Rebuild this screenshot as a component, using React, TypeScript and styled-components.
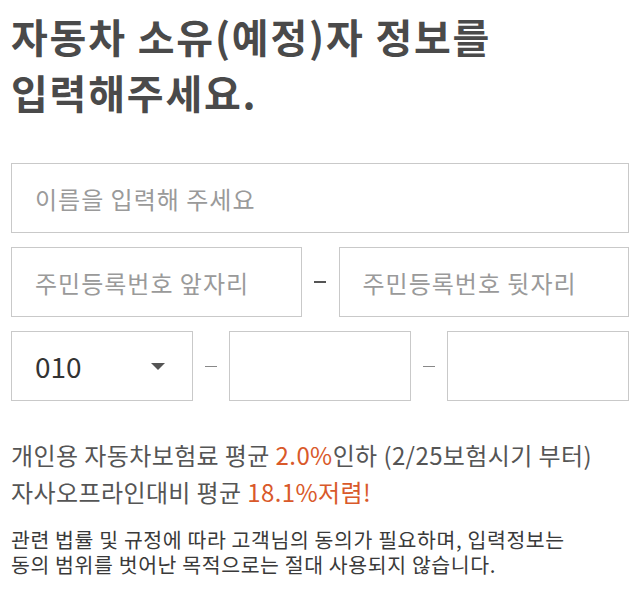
import styled, { createGlobalStyle } from 'styled-components';

const GlobalStyle = createGlobalStyle`
  html, body {
    margin: 0;
    padding: 0;
    background: #fff;
  }
  body {
    font-family: 'Noto Sans CJK KR', 'Noto Sans', sans-serif;
  }
`;

const Page = styled.div`
  width: 618px;
  padding: 8px 7px 0 11px;
`;

const Title = styled.h1`
  margin: 0;
  font-size: 40px;
  line-height: 56px;
  font-weight: 700;
  color: #4a4a4a;
  letter-spacing: 1.8px;
`;

const Form = styled.div`
  display: flex;
  flex-direction: column;
  gap: 14px;
  margin-top: 43px;
`;

const Row = styled.div<{ $cols: string }>`
  display: grid;
  grid-template-columns: ${(p) => p.$cols};
  align-items: center;
`;

const Field = styled.div<{ $placeholder?: boolean }>`
  box-sizing: border-box;
  height: 70px;
  border: 1px solid #c9c9c9;
  background: #fff;
  display: flex;
  align-items: center;
  justify-content: space-between;
  padding: 0 27px 0 23px;
  font-size: ${(p) => (p.$placeholder ? '24px' : '28px')};
  letter-spacing: ${(p) => (p.$placeholder ? '1px' : '0')};
  color: ${(p) => (p.$placeholder ? '#9a9a9a' : '#333')};
  white-space: nowrap;
`;

const Dash = styled.span<{ $bold?: boolean }>`
  justify-self: center;
  width: 12px;
  height: ${(p) => (p.$bold ? '2px' : '1px')};
  background: ${(p) => (p.$bold ? '#555' : '#888')};
`;

const Caret = styled.span`
  width: 0;
  height: 0;
  border-left: 7px solid transparent;
  border-right: 7px solid transparent;
  border-top: 7px solid #555;
`;

const Info = styled.p`
  margin: 35px 0 0;
  font-size: 24px;
  line-height: 37px;
  color: #555;
  letter-spacing: 0.4px;
`;

const Accent = styled.span`
  color: #d9592a;
`;

const Notice = styled.p`
  margin: 17px 0 0;
  font-size: 20.5px;
  line-height: 25px;
  color: #3a3a3a;
  letter-spacing: 0.6px;
`;

export default function App() {
  return (
    <>
      <GlobalStyle />
      <Page>
        <Title>
          자동차 소유(예정)자 정보를
          <br />
          입력해주세요.
        </Title>
        <Form>
          <Field $placeholder>이름을 입력해 주세요</Field>
          <Row $cols="1fr 37px 1fr">
            <Field $placeholder>주민등록번호 앞자리</Field>
            <Dash $bold />
            <Field $placeholder>주민등록번호 뒷자리</Field>
          </Row>
          <Row $cols="1fr 36px 1fr 36px 1fr">
            <Field>
              010
              <Caret />
            </Field>
            <Dash />
            <Field />
            <Dash />
            <Field />
          </Row>
        </Form>
        <Info>
          개인용 자동차보험료 평균 <Accent>2.0%</Accent>인하 (2/25보험시기 부터)
          <br />
          자사오프라인대비 평균 <Accent>18.1%저렴!</Accent>
        </Info>
        <Notice>
          관련 법률 및 규정에 따라 고객님의 동의가 필요하며, 입력정보는
          <br />
          동의 범위를 벗어난 목적으로는 절대 사용되지 않습니다.
        </Notice>
      </Page>
    </>
  );
}
